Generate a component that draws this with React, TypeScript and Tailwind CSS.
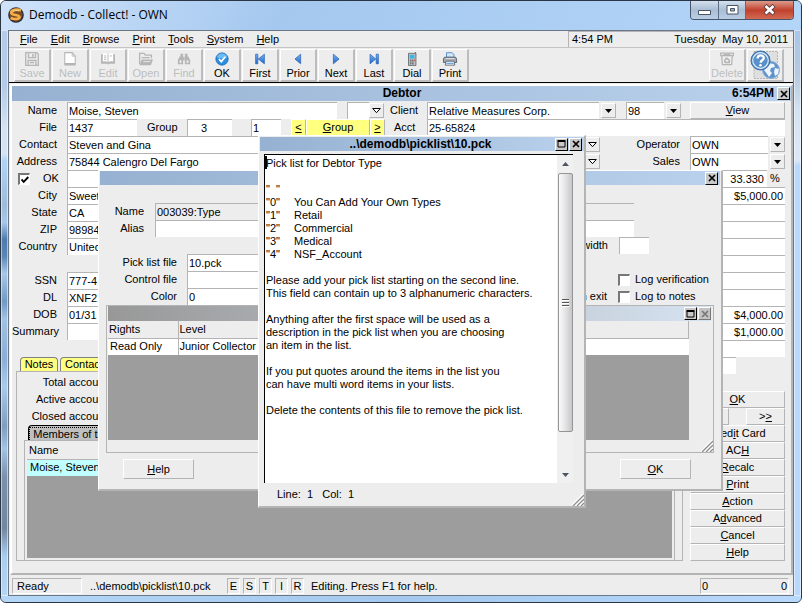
import { useState } from 'react';
import type { ReactNode } from 'react';
import clsx from 'clsx';

const pickList = [
  'Pick list for Debtor Type',
  '',
  '"  "',
  '"0"\tYou Can Add Your Own Types',
  '"1"\tRetail',
  '"2"\tCommercial',
  '"3"\tMedical',
  '"4"\tNSF_Account',
  '',
  'Please add your pick list starting on the second line.',
  'This field can contain up to 3 alphanumeric characters.',
  '',
  'Anything after the first space will be used as a',
  'description in the pick list when you are choosing',
  'an item in the list.',
  '',
  'If you put quotes around the items in the list you',
  'can have multi word items in your lists.',
  '',
  'Delete the contents of this file to remove the pick list.',
].join('\n');

const menus = ['_File', '_Edit', '_Browse', '_Print', '_Tools', '_System', '_Help'];

const personFields = [
  { label: 'City', value: 'Sweet' },
  { label: 'State', value: 'CA' },
  { label: 'ZIP', value: '98984' },
  { label: 'Country', value: 'United' },
  null,
  { label: 'SSN', value: '777-41' },
  { label: 'DL', value: 'XNF21' },
  { label: 'DOB', value: '01/31' },
  { label: 'Summary', value: '' },
];

const amounts = ['$5,000.00', '', '', '', '', '', '', '$4,000.00', '$1,000.00', ''];

const sideButtons = ['Cred_it Card', 'AC_H', '_Recalc', '_Print', '_Action', 'A_dvanced', '_Cancel', '_Help'];

// Text with an underlined access key: the letter after "_"
function Key({ text }: { text: string }) {
  const i = text.indexOf('_');
  if (i < 0) return <>{text}</>;
  return (
    <span className="whitespace-pre">
      {text.slice(0, i)}
      <u className="underline underline-offset-1">{text[i + 1]}</u>
      {text.slice(i + 2)}
    </span>
  );
}

function Field({ label, value = '', className }: { label: string; value?: string; className?: string }) {
  return (
    <input
      aria-label={label}
      defaultValue={value}
      className={clsx('h-[17px] min-w-0 border-t border-l border-[#b4b4b4] pl-px outline-none', className || 'bg-white')}
    />
  );
}

function Row({ children, className }: { children?: ReactNode; className?: string }) {
  return <div className={clsx('flex h-[17px] items-center', className)}>{children}</div>;
}

function RaisedButton({ children, className }: { children: ReactNode; className?: string }) {
  return (
    <button className={clsx('flex items-center justify-center border border-t-white border-l-white border-r-[#b4b4b4] border-b-[#b4b4b4]', className || 'bg-[#ededed]')}>
      {children}
    </button>
  );
}

function DropButton({ label, hollow }: { label: string; hollow?: boolean }) {
  return (
    <button aria-label={label} className="flex h-[15px] w-[15px] shrink-0 items-center justify-center border border-t-white border-l-white border-r-[#b4b4b4] border-b-[#b4b4b4] bg-[#ededed]">
      {hollow ? (
        <svg width="9" height="6" viewBox="0 0 9 6"><path d="M.7.5h7.6L4.5 4.7z" fill="#fff" stroke="#000" /></svg>
      ) : (
        <svg width="7" height="4" viewBox="0 0 7 4"><path d="M0 0h7L3.500 4z" fill="#000" /></svg>
      )}
    </button>
  );
}

function Select({ label, value, className }: { label: string; value: string; className: string }) {
  return (
    <div className={clsx('flex items-center', className)}>
      <select aria-label={label} className="mr-[2px] h-[17px] min-w-0 flex-1 appearance-none border-t border-l border-[#b4b4b4] bg-white pl-px outline-none">
        <option>{value}</option>
      </select>
      <DropButton label={`Open ${label}`} />
    </div>
  );
}

function CaptionButton({ kind, disabled }: { kind: 'close' | 'max'; disabled?: boolean }) {
  return (
    <button
      aria-label={kind === 'close' ? 'Close' : 'Maximize'}
      disabled={disabled}
      className={clsx('flex h-[13px] w-[13px] shrink-0 items-center justify-center border border-t-white border-l-white', disabled ? 'border-r-[#777] border-b-[#777] bg-[#c4c4c4]' : 'border-r-black border-b-black bg-[#c8c8c8]')}
    >
      {kind === 'close' ? (
        <svg width="8" height="8" viewBox="0 0 8 8"><path d="M1 1l6 6M7 1L1 7" stroke={disabled ? '#777' : '#000'} strokeWidth="1.700" /></svg>
      ) : (
        <svg width="9" height="8" viewBox="0 0 9 8"><path d="M1 1.500h7v5.500h-7z" fill="none" stroke="#000" /><path d="M.5 1h8" stroke="#000" strokeWidth="2" /></svg>
      )}
    </button>
  );
}

function Grip() {
  return (
    <svg width="12" height="12" viewBox="0 0 12 12" className="block">
      <path d="M0 12L12 0M4 12l8-8M8 12l4-4" stroke="#fff" strokeWidth="2.500" />
      <path d="M1 12L12 1M5 12l7-7M9 12l3-3" stroke="#8c8c8c" strokeWidth="1.300" />
    </svg>
  );
}

function CheckBox({ label, checked, className }: { label: string; checked?: boolean; className?: string }) {
  const [on, setOn] = useState(!!checked);
  return (
    <label className={clsx('flex items-center', className)}>
      <span className="relative flex h-[12px] w-[12px] shrink-0">
        <input
          type="checkbox"
          checked={on}
          onChange={() => setOn(!on)}
          className="h-[12px] w-[12px] appearance-none border border-t-2 border-l-2 border-t-[#777] border-l-[#777] border-r-white border-b-white bg-white"
        />
        {on && (
          <svg width="8" height="8" viewBox="0 0 8 8" className="pointer-events-none absolute top-[3px] left-[3px]">
            <path d="M.5 3.500l2.200 2.300L7.300 1" fill="none" stroke="#000" strokeWidth="1.900" />
          </svg>
        )}
      </span>
      <span>{label}</span>
    </label>
  );
}

/* Toolbar drawings */
const grey = '#b5b5b5';

const toolIcons: Record<string, ReactNode> = {
  Save: (
    <g fill="none" stroke={grey} strokeWidth="1.500">
      <path d="M1 .8h12.500l1.700 1.700v12.700H.8V.8z" />
      <path d="M4 1.500v5h8v-5M3.500 15V9.500h9V15M5.500 12h5" />
      <path d="M9 2.500v3" strokeWidth="2" />
    </g>
  ),
  New: (
    <g>
      <path d="M2 .7h8.500l3.500 4v8.500H2z" fill="#fff" stroke={grey} strokeWidth="1.200" />
      <path d="M10.500.7v4H14" fill="none" stroke={grey} />
      <path d="M1.500 14.500h13" stroke={grey} strokeWidth="2" />
    </g>
  ),
  Edit: (
    <g>
      <path d="M0 2.500h16v11H9L8 14.500 7 13.500H0z" fill={grey} />
      <path d="M2 2c2-.8 4-.6 5.500.5v9C6 10.500 4 10.500 2 11zM14 2c-2-.8-4-.6-5.500.5v9c1.500-1 3.500-1 5.500-.5z" fill="#fff" />
      <path d="M3.500 4.500h2.500M3.500 6.500h2.500M3.500 8.500h2.500M10 4.500h2.500" stroke={grey} />
    </g>
  ),
  Open: (
    <g>
      <path d="M.7 14V1.500h5l1.500 2h7V7" fill="none" stroke={grey} strokeWidth="1.500" />
      <path d="M3 6.500h9" stroke={grey} strokeWidth="1.500" />
      <path d="M3 8.500h13L13.500 15H.7z" fill={grey} />
      <path d="M5 11h8" stroke="#ededed" />
    </g>
  ),
  Find: (
    <g fill={grey}>
      <path d="M4 2h3v3H4zM9 2h3v3H9zM3 5h4.300v5H7v4H1V9zM13 5H8.700v5H9v4h6V9zM7 6h2v3H7z" />
      <path d="M3 9.500h2v3H3zM11 9.500h2v3h-2z" fill="#ededed" />
    </g>
  ),
  OK: (
    <g>
      <circle cx="8" cy="8" r="7" fill="#2a8fe0" stroke="#1667b8" />
      <path d="M2 6a6.400 6.400 0 0112 0c-3 2-8 2-12 0z" fill="#69bcf5" />
      <path d="M4.500 8l2.700 3 4.600-5.500" fill="none" stroke="#fff" strokeWidth="2" />
    </g>
  ),
  First: <path d="M3 2.500h2.500v11H3zM13 2.500v11L6 8z" fill="url(#arrow)" stroke="#2260b8" strokeWidth=".8" />,
  Prior: <path d="M11 2.500v11L4.500 8z" fill="url(#arrow)" stroke="#2260b8" strokeWidth=".8" />,
  Next: <path d="M5 2.500v11L11.500 8z" fill="url(#arrow)" stroke="#2260b8" strokeWidth=".8" />,
  Last: <path d="M10.500 2.500H13v11h-2.500zM3.500 2.500v11l6.500-5.500z" fill="url(#arrow)" stroke="#2260b8" strokeWidth=".8" />,
  Dial: (
    <g>
      <path d="M12 0v4" stroke="#777" strokeWidth="1.300" />
      <path d="M4 1.500h8.500v14H4z" fill="#b9bcc0" stroke="#666b70" />
      <path d="M5.700 3.500h5v4h-5z" fill="#35b6e8" />
      <path d="M6 9.500h1.300M8.300 9.500h1.300M6 11.500h1.300M8.300 11.500h1.300M6 13.500h1.300M8.300 13.500h1.300" stroke="#444" strokeWidth="1.200" />
      <path d="M10.300 9.500h1.200" stroke="#d22" strokeWidth="1.200" />
    </g>
  ),
  Print: (
    <g>
      <path d="M4 6V.8h6.500L12.500 3v3z" fill="#cfe6fb" stroke="#4f86c6" />
      <path d="M1.500 6h13l1 2v4H.5V8z" fill="#a4a9b0" stroke="#555b62" />
      <path d="M3 7.500h10" stroke="#e8eaec" />
      <path d="M3.500 10.500h9l1 4.500h-11z" fill="#f4f8fc" stroke="#59616b" />
      <path d="M4 13h8" stroke="#6aa5e0" strokeWidth="1.500" />
    </g>
  ),
  Delete: (
    <g fill="none" stroke={grey} strokeWidth="1.400">
      <path d="M.8 1.200h14.400v3H.8z" />
      <path d="M2 4.500l.7 10h10.600l.7-10M4 2.700h8" />
      <path d="M5.500 12V9.500l2-2.500 2.500 2M10.500 8.500V12h-5" strokeWidth="1.800" />
    </g>
  ),
};

function ToolButton({ name, disabled }: { name: string; disabled?: boolean }) {
  return (
    <button
      disabled={disabled}
      className="flex h-[33px] w-[37px] flex-col items-center border border-r-2 border-b-2 border-t-white border-l-white border-r-[#bcbcbc] border-b-[#bcbcbc] bg-[#ededed] pt-[2px] text-black disabled:text-[#bdbdbd]"
    >
      <svg width="16" height="16" viewBox="0 0 16 16">{toolIcons[name]}</svg>
      <span className="leading-[14px]">{name}</span>
    </button>
  );
}

function Toolbar() {
  return (
    <div className="flex h-[35px] border-b border-black bg-[#ededed] pt-px pr-[9px] pl-[5px]">
      <div className="flex gap-px">
        {['Save', 'New', 'Edit', 'Open', 'Find'].map((n) => <ToolButton key={n} name={n} disabled />)}
        {['OK', 'First', 'Prior', 'Next', 'Last', 'Dial', 'Print'].map((n) => <ToolButton key={n} name={n} />)}
      </div>
      <div className="ml-auto flex gap-px">
        <ToolButton name="Delete" disabled />
        <button aria-label="Web help" className="flex h-[33px] w-[37px] items-center justify-center border border-r-2 border-b-2 border-t-white border-l-white border-r-[#bcbcbc] border-b-[#bcbcbc] bg-[#ededed]">
          <svg width="30" height="30" viewBox="0 0 30 30">
            <path d="M4 1.500h23.500v27H4z" fill="#dfdfdf" stroke="#b5b5b5" strokeDasharray="2 1" />
            <circle cx="21" cy="20" r="8.500" fill="#5f93cb" stroke="#8fb1d6" />
            <path d="M14 16l4-3 6 1 1 3-4 1-1 3 2 2-3 4-2-3-3-4zM25 18l4 1-1 5-3 2-1-4z" fill="#edf4fb" />
            <circle cx="10.500" cy="10.500" r="9.500" fill="#4d83bd" stroke="#3a6da8" />
            <circle cx="10.500" cy="10.500" r="7.800" fill="#5a90ca" stroke="#dcebf8" strokeWidth="1.200" />
            <path d="M7.600 8.500c0-4.200 6.200-4 6.200-.4 0 2.200-3.200 2.100-3.200 4.600" fill="none" stroke="#fff" strokeWidth="2.300" />
            <circle cx="10.500" cy="15.300" r="1.300" fill="#fff" />
          </svg>
        </button>
      </div>
    </div>
  );
}

function TitleBar() {
  return (
    <header className="flex h-[29px] items-start bg-linear-115 from-[#cfe3fa] via-[#a5c8ef] via-35% to-[#b3d5f8] pr-[7px] pl-[7px]">
      <svg width="16" height="16" viewBox="0 0 16 16" className="mt-[6px]">
        <circle cx="8" cy="8" r="7.800" fill="#2d2a3a" />
        <circle cx="8" cy="8" r="6.500" fill="#7a4c25" />
        <path d="M13 3.500C9 1.500 3 3 3.200 5.800c.2 2.500 8 2 8.300 4.200.2 2.300-5.500 2.500-9 1" fill="none" stroke="#f5b04a" strokeWidth="2.600" />
        <path d="M11 4C8 3 5 4 5 5.500" fill="none" stroke="#ffe2a0" />
      </svg>
      <h1 className="mt-[5px] ml-[5px] font-['Open_Sans','Noto_Sans',sans-serif] text-[12px] leading-[17px]">Demodb - Collect! - OWN</h1>
      <div className="ml-auto flex h-[19px] overflow-hidden rounded-b border border-t-0 border-[#46566c]">
        <button aria-label="Minimize" className="flex w-[28px] items-center justify-center border-r border-[#5b6c84] bg-linear-to-b from-[#d4e0ee] via-[#a9bdd4] to-[#b9cde4]">
          <svg width="13" height="12" viewBox="0 0 13 12"><path d="M.5 6.500h12v4H.5z" fill="#fff" stroke="#4a5564" /></svg>
        </button>
        <button aria-label="Restore" className="flex w-[27px] items-center justify-center border-r border-[#5b6c84] bg-linear-to-b from-[#d4e0ee] via-[#a9bdd4] to-[#b9cde4]">
          <svg width="13" height="12" viewBox="0 0 13 12"><path d="M1 1.500h11v8.500H1z" fill="#fff" stroke="#4a5564" /><path d="M4.500 4.500h4v2.500h-4z" fill="#9fb4cd" stroke="#4a5564" /></svg>
        </button>
        <button aria-label="Close" className="flex w-[47px] items-center justify-center bg-linear-to-b from-[#dc9a8c] via-[#c0402c] to-[#d26a52]">
          <svg width="13" height="12" viewBox="0 0 13 12"><path d="M2 1.500l9 8.500M11 1.500L2 10" stroke="#55383a" strokeWidth="4.400" /><path d="M2.500 2l8 7.500M10.500 2l-8 7.500" stroke="#fff" strokeWidth="2.600" /></svg>
        </button>
      </div>
    </header>
  );
}

function DebtorForm() {
  return (
    <section className="mt-px ml-px flex flex-1 flex-col border-t-2 border-r-2 border-b-2 border-l-2 border-t-white border-l-white border-r-[#b4b4b4] border-b-[#b4b4b4] bg-[#ededed]">
      <div className="flex h-[15px] items-center bg-linear-to-r from-[#96b1d1] to-[#b9d1ec] pr-px">
        <span className="w-[60px]" />
        <h2 className="flex-1 text-center text-[12px] font-bold">Debtor</h2>
        <span className="mr-[3px] text-[12px] font-bold">6:54PM</span>
        <CaptionButton kind="close" />
      </div>
      <div className="flex flex-1 flex-col pt-px pr-[6px]">
        <Row>
          <span className="mr-[10px] w-[45px] text-right">Name</span>
          <Field label="Name" value="Moise, Steven" className="w-[270px] bg-white" />
          <Field label="Suffix" className="ml-[10px] w-[22px] bg-white" />
          <DropButton label="Open suffix" hollow />
          <span className="w-[43px] pl-[6px]">Client</span>
          <Select label="Client" value="Relative Measures Corp." className="min-w-0 flex-1" />
          <Select label="Client number" value="98" className="ml-[10px] w-[55px]" />
          <RaisedButton className="ml-[9px] h-[17px] w-[95px] bg-[#ededed]"><Key text="_View" /></RaisedButton>
        </Row>
        <Row>
          <span className="mr-[10px] w-[45px] text-right">File</span>
          <Field label="File" value="1437" className="w-[70px] bg-white" />
          <span className="ml-[10px] w-[40px]">Group</span>
          <Field label="Group" value="3" className="w-[45px] bg-white pr-[13px] text-center" />
          <Field label="Group member" value="1" className="ml-[19px] w-[30px] bg-white" />
          <RaisedButton className="ml-[10px] h-[17px] w-[15px] bg-[#ffff80]"><Key text="_<" /></RaisedButton>
          <RaisedButton className="h-[17px] w-[64px] bg-[#ffff80]"><Key text="_Group" /></RaisedButton>
          <RaisedButton className="h-[17px] w-[15px] bg-[#ffff80]"><Key text="_>" /></RaisedButton>
          <span className="w-[42px] pl-[9px]">Acct</span>
          <Field label="Acct" value="25-65824" className="flex-1 bg-white" />
        </Row>
        {[
          ['Contact', 'Steven and Gina', 'Operator'],
          ['Address', '75844 Calengro Del Fargo', 'Sales'],
        ].map(([label, value, right]) => (
          <Row key={label}>
            <span className="mr-[10px] w-[45px] text-right">{label}</span>
            <Field label={label} value={value} className="w-[270px] bg-white" />
            <div className="ml-auto flex items-center">
              <DropButton label={`Open ${label}`} hollow />
              <span className="mr-[10px] w-[80px] text-right">{right}</span>
              <Select label={right} value="OWN" className="w-[95px]" />
            </div>
          </Row>
        ))}
        <div className="flex flex-1">
          <div className="flex min-w-0 flex-1 flex-col">
            <Row>
              <CheckBox label="OK" checked className="ml-[6px] w-[49px] gap-[13px]" />
              <Field label="Address 2" className="w-[270px] bg-white" />
            </Row>
            {personFields.map((f, i) => (
              <Row key={i}>
                {f && (
                  <>
                    <span className="mr-[10px] w-[45px] text-right">{f.label}</span>
                    <Field label={f.label} value={f.value} className="w-[270px] bg-white" />
                  </>
                )}
              </Row>
            ))}
            <div className="mt-[17px] flex h-[14px] gap-[2px] pl-[8px]">
              <button className="w-[38px] rounded-t border border-b-0 border-[#808080] bg-[#ffff80]">Notes</button>
              <button className="rounded-t border border-b-0 border-[#808080] bg-[#ffff80] px-[4px]">Contacts</button>
            </div>
            <div className="mr-[7px] mb-[12px] ml-[4px] flex flex-1 flex-col border border-[#b4b4b4] pt-[2px]">
              {['Total accounts', 'Active accounts', 'Closed accounts'].map((t) => (
                <Row key={t}><span className="w-[96px] text-right">{t}</span></Row>
              ))}
              <button className="ml-[11px] h-[15px] w-[120px] rounded-t border border-b-0 border-black bg-[#c0c0c0]">
                <span className="block border border-b-0 border-dotted border-black leading-[12px]">Members of this group</span>
              </button>
              <div className="mr-[7px] ml-[7px] flex flex-1 flex-col border-t border-r border-l border-[#b4b4b4] bg-[#ededed] px-[2px] pt-px pb-[2px]">
                <table className="w-full border-collapse">
                  <thead>
                    <tr className="h-[17px] border-b border-[#b4b4b4]"><th className="pl-[2px] text-left font-normal">Name</th></tr>
                  </thead>
                  <tbody>
                    <tr className="h-[17px] bg-[#bfffff]"><td className="pl-[3px]">Moise, Steven</td></tr>
                  </tbody>
                </table>
                <div className="flex-1 bg-[#9d9d9d]" />
              </div>
            </div>
          </div>
          <div className="flex w-[95px] flex-col">
            <Row>
              <Field label="Rate" value="33.330" className="w-[77px] bg-white pr-[3px] text-right" />
              <span className="pl-[3px]">%</span>
            </Row>
            {amounts.map((a, i) => (
              <Field key={i} label={`Amount ${i + 1}`} value={a} className="w-full shrink-0 bg-white pr-[2px] text-right" />
            ))}
            <Field label="Code" className="w-[46px] shrink-0 bg-white" />
            <RaisedButton className="mt-[17px] h-[17px] bg-[#ededed]"><Key text="_OK" /></RaisedButton>
            <div className="flex">
              <RaisedButton className="h-[17px] w-[39px] bg-[#ededed]"><Key text="<_<" /></RaisedButton>
              <RaisedButton className="ml-auto h-[17px] w-[39px] bg-[#ededed]"><Key text=">_>" /></RaisedButton>
            </div>
            {sideButtons.map((b) => (
              <RaisedButton key={b} className="h-[17px] bg-[#ededed]"><Key text={b} /></RaisedButton>
            ))}
          </div>
        </div>
      </div>
    </section>
  );
}

function TypeDialog() {
  return (
    <section className="absolute top-[169px] left-[97px] w-[625px] border border-r-2 border-b-2 border-t-white border-l-white border-r-[#b4b4b4] border-b-[#b4b4b4] bg-[#ededed] pb-[10px]">
      <div className="mx-px flex h-[14px] items-center justify-end bg-linear-to-r from-[#96b1d1] to-[#b9d1ec] pr-[2px]">
        <CaptionButton kind="close" />
      </div>
      <div className="mt-[18px] pl-[10px]">
        <Row>
          <span className="mr-[11px] w-[35px] text-right">Name</span>
          <Field label="Name" value="003039:Type" className="w-[479px] bg-[#ededed]" />
        </Row>
        <Row>
          <span className="mr-[11px] w-[35px] text-right">Alias</span>
          <Field label="Alias" className="w-[479px] bg-white" />
        </Row>
        <Row className="pl-[400px]">
          <span className="mr-[11px] w-[99px] text-right">width</span>
          <Field label="width" className="w-[30px] bg-white" />
        </Row>
        <Row>
          <span className="mr-[10px] w-[68px] text-right">Pick list file</span>
          <Field label="Pick list file" value="10.pck" className="w-[300px] bg-white" />
        </Row>
        <Row>
          <span className="mr-[10px] w-[68px] text-right">Control file</span>
          <Field label="Control file" className="w-[300px] bg-white" />
          <CheckBox label="Log verification" className="ml-[131px] gap-[5px]" />
        </Row>
        <Row>
          <span className="mr-[10px] w-[68px] text-right">Color</span>
          <Field label="Color" value="0" className="w-[300px] bg-white" />
          <span className="w-[120px] text-right">on exit</span>
          <CheckBox label="Log to notes" className="ml-[11px] gap-[5px]" />
        </Row>
      </div>
      <div className="mr-[7px] ml-[7px] flex h-[148px] flex-col border border-[#b4b4b4] pl-px">
        <div className="mr-[2px] flex h-[15px] shrink-0 items-center justify-end gap-px bg-linear-to-r from-[#989898] to-[#d6e3f2]">
          <CaptionButton kind="max" />
          <CaptionButton kind="close" disabled />
        </div>
        <div className="mr-[24px] flex flex-1 flex-col bg-[#9d9d9d]">
          <table className="w-full border-collapse">
            <thead>
              <tr className="h-[17px] border-b border-[#b4b4b4] bg-[#ededed]">
                <th className="w-[70px] border-r border-[#b4b4b4] pl-px text-left font-normal">Rights</th>
                <th className="border-r border-[#b4b4b4] pl-px text-left font-normal">Level</th>
              </tr>
            </thead>
            <tbody>
              <tr className="h-[17px] bg-white">
                <td className="border-r border-[#b4b4b4] pl-[2px]">Read Only</td>
                <td className="pl-px">Junior Collector</td>
              </tr>
            </tbody>
          </table>
        </div>
        <div className="flex h-[12px] justify-end"><Grip /></div>
      </div>
      <div className="mt-[6px] flex justify-between pr-[30px] pl-[24px]">
        <RaisedButton className="h-[20px] w-[71px] bg-[#ededed]"><Key text="_Help" /></RaisedButton>
        <RaisedButton className="h-[20px] w-[71px] bg-[#ededed]"><Key text="_OK" /></RaisedButton>
      </div>
    </section>
  );
}

function PickListEditor() {
  return (
    <section className="absolute top-[134px] left-[257px] w-[328px] border border-r-2 border-b-2 border-t-white border-l-white border-r-[#b4b4b4] border-b-[#b4b4b4] bg-[#ededed]">
      <div className="mt-px ml-px flex h-[14px] items-center gap-px bg-linear-to-r from-[#96b1d1] to-[#b9d1ec] pr-[2px]">
        <h2 className="flex-1 pl-[27px] text-center text-[12px] font-bold">..\demodb\picklist\10.pck</h2>
        <CaptionButton kind="max" />
        <CaptionButton kind="close" />
      </div>
      <div className="relative mt-[3px] mr-[11px] ml-[5px] flex h-[329px] border-t border-l border-black bg-white">
        <textarea
          aria-label="Pick list"
          defaultValue={pickList}
          spellCheck={false}
          className="flex-1 resize-none overflow-hidden bg-white pt-[2px] pl-px leading-[13px] outline-none [tab-size:28px]"
        />
        <span className="absolute top-px left-0 h-[13px] w-[2px] bg-black" />
        <div className="flex w-[16px] flex-col items-center bg-[#f0f0f0]">
          <button aria-label="Scroll up" className="flex h-[18px] w-full items-center justify-center">
            <svg width="7" height="4" viewBox="0 0 7 4"><path d="M0 4h7L3.500 0z" fill="#4c5560" /></svg>
          </button>
          <div className="flex h-[259px] w-[15px] items-center justify-center rounded-xs border border-[#959595] bg-linear-to-r from-[#fafafa] via-[#e3e3e3] to-[#c6c6cb]">
            <svg width="7" height="8" viewBox="0 0 7 8"><path d="M0 .5h7M0 3.500h7M0 6.500h7" stroke="#555" /><path d="M0 1.500h7M0 4.500h7M0 7.500h7" stroke="#fff" /></svg>
          </div>
          <button aria-label="Scroll down" className="mt-auto flex h-[17px] w-full items-center justify-center">
            <svg width="7" height="4" viewBox="0 0 7 4"><path d="M0 0h7L3.500 4z" fill="#4c5560" /></svg>
          </button>
        </div>
      </div>
      <div className="flex h-[23px] items-end justify-between">
        <p className="self-center pl-[18px] whitespace-pre">Line:  1   Col:  1</p>
        <Grip />
      </div>
    </section>
  );
}

export default function App() {
  return (
    <div className="relative flex min-h-screen flex-col overflow-hidden rounded-md border border-[#2b3644] bg-[#b4d6f7] font-['Liberation_Sans',Arial,sans-serif] text-[11px] leading-[13px] text-black">
      <TitleBar />
      <div className="flex flex-1">
        <div className="w-[7px] bg-[linear-gradient(to_bottom,#b5cde8,#b3cbe6_10%,#d5e2f2_17%,#d5e2f2_22%,#b0d4f8_23%,#9fbbd9_31%,#a8c8e8_34%,#4d7cb0_37%,#5a86b6_40%,#a8c8e8_43%,#6f99c6_48%,#a2c2e4_51%,#8aaed6_58%,#a9cbec_63%,#7f9dbf_70%,#a3c3e3_74%,#7a90ac_79%,#72879f_88%,#a9cdf0_93%,#b4d6f7)] inset-ring inset-ring-white/50" />
        <main className="flex min-w-0 flex-1 flex-col border border-[#6b7784] bg-[#ededed]">
          <nav className="flex h-[17px] items-stretch border-b border-[#c4c4c4]">
            <div className="flex gap-[13px] pl-[11px]">
              {menus.map((m) => <button key={m}><Key text={m} /></button>)}
            </div>
            <div className="ml-auto flex w-[225px] items-center justify-between border-t border-l border-[#b4b4b4] pr-[5px] pl-[3px]">
              <span>4:54 PM</span>
              <span className="whitespace-pre">Tuesday  May 10, 2011</span>
            </div>
          </nav>
          <Toolbar />
          <DebtorForm />
          <footer className="flex h-[20px] items-center pt-[2px] pr-[4px] pl-[3px]">
            <span className="flex h-[16px] w-[70px] items-center border border-t-[#b4b4b4] border-l-[#b4b4b4] border-r-white border-b-white pl-[4px]">Ready</span>
            <span className="w-[145px] pl-[8px]">..\demodb\picklist\10.pck</span>
            <div className="flex gap-[3px]">
              {['E', 'S', 'T', 'I', 'R'].map((c) => (
                <span key={c} className="flex h-[16px] w-[13px] items-center justify-center border border-t-[#b4b4b4] border-l-[#b4b4b4] border-r-white border-b-white">{c}</span>
              ))}
            </div>
            <span className="pl-[7px]">Editing. Press F1 for help.</span>
            <span className="ml-auto flex h-[16px] w-[89px] items-center justify-between border border-t-[#b4b4b4] border-l-[#b4b4b4] border-r-white border-b-white px-px">
              <span>0</span>
              <span>0</span>
            </span>
          </footer>
        </main>
        <div className="w-[7px] bg-[linear-gradient(to_bottom,#a9c6e8,#b5c9df_8%,#d3e2f3_14%,#dbe8f6_23%,#b8d9fc_24%,#b8d9fc)] inset-ring inset-ring-white/50" />
      </div>
      <div className="h-[6px] bg-linear-to-r from-[#b4d6f7] via-[#a5c8ee] to-[#b8d9fc]" />
      <TypeDialog />
      <PickListEditor />
      <svg width="0" height="0" className="absolute">
        <linearGradient id="arrow" x1="0" y1="0" x2="0" y2="1">
          <stop offset="0" stopColor="#7ab4f2" />
          <stop offset="1" stopColor="#1f66cc" />
        </linearGradient>
      </svg>
    </div>
  );
}
